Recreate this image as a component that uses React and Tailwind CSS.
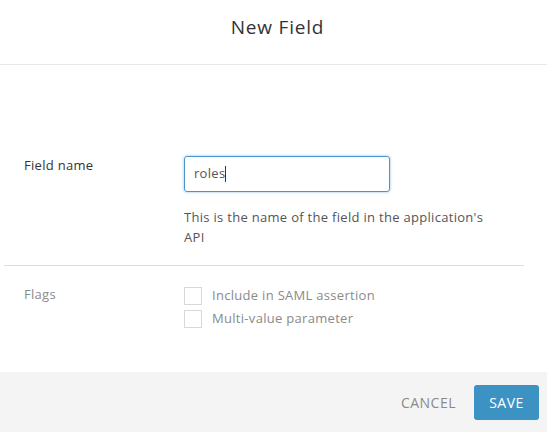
import React from "react";

const font = { fontFamily: "'Open Sans', Arial, sans-serif" };

function Check({ label }) {
  return (
    <label className="flex items-center h-[23px]">
      <span className="w-[18px] h-[18px] border border-[#d8d8d8] bg-white" />
      <span className="ml-[10px] text-[13px] tracking-[0.3px] text-[#8a8a8a]">{label}</span>
    </label>
  );
}

export default function App() {
  return (
    <div className="w-[547px] h-[432px] bg-white flex flex-col overflow-hidden" style={font}>
      <div className="h-[65px] border-b border-[#e8e8e8] flex items-center justify-center pl-[8px]">
        <h1 className="text-[19px] tracking-[0.8px] text-[#333] -mt-[10px]">New Field</h1>
      </div>

      <div className="flex-1 flex flex-col">
        <div className="flex pt-[91px] pl-[24px]">
          <div className="w-[160px] text-[13px] tracking-[0.3px] text-[#333]">Field name</div>
          <div className="flex flex-col">
            <div className="w-[206px] h-[36px] border border-[#4a95cc] rounded-[3px] shadow-[0_0_3px_rgba(74,149,204,0.6)] flex items-center px-[9px] text-[13px] tracking-[0.3px] text-[#555]">
              roles<span className="w-px h-[16px] bg-[#333]" />
            </div>
            <p className="mt-[15px] w-[322px] h-[40px] text-[13px] tracking-[0.3px] leading-[20px] text-[#555]">
              This is the name of the field in the application's API
            </p>
          </div>
        </div>

        <div className="mt-[18px] ml-[4px] w-[520px] border-t border-[#dcdcdc]" />

        <div className="flex pt-[18px] pl-[24px]">
          <div className="w-[160px] pt-[1px] text-[13px] tracking-[0.3px] text-[#8a8a8a]">Flags</div>
          <div className="flex flex-col">
            <Check label="Include in SAML assertion" />
            <Check label="Multi-value parameter" />
          </div>
        </div>
      </div>

      <div className="h-[60px] bg-[#f4f4f4] flex items-center justify-end pr-[8px]">
        <button className="text-[14px] tracking-[0.5px] text-[#8a8a8a] mr-[18px]">CANCEL</button>
        <button className="w-[65px] h-[35px] bg-[#3d92c4] rounded-[3px] text-white text-[14px] tracking-[0.5px]">SAVE</button>
      </div>
    </div>
  );
}
